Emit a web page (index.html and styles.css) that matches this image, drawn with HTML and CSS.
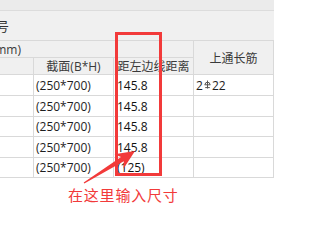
FILE: index.html
```html
<!DOCTYPE html>
<html lang="zh">
<head>
<meta charset="utf-8">
<title>梁参数表</title>
<link rel="stylesheet" href="styles.css">
</head>
<body>
<div class="view">
  <div class="sheet">
    <div class="band"></div>
    <div class="title"><span>构件编号</span></div>
    <div class="hdr merge"><span>定位尺寸(mm)</span></div>
    <div class="hdr rebar">上通长筋</div>
    <div class="hdr"></div>
    <div class="hdr center">截面(B*H)</div>
    <div class="hdr center">距左边线距离</div>

    <div class="cell"></div>
    <div class="cell">(250*700)</div>
    <div class="cell val">145.8</div>
    <div class="cell">2<svg class="bar" width="7" height="9" viewBox="0 0 7 9"><path d="M3.5 0.5V8.5M1 4.8A2.5 2.6 0 0 1 6 4.8M0.6 4.8H6.4M1.2 7.6H5.8" fill="none" stroke="#555" stroke-width="1"/></svg>22</div>

    <div class="cell"></div>
    <div class="cell">(250*700)</div>
    <div class="cell val">145.8</div>
    <div class="cell"></div>

    <div class="cell"></div>
    <div class="cell">(250*700)</div>
    <div class="cell val">145.8</div>
    <div class="cell"></div>

    <div class="cell"></div>
    <div class="cell">(250*700)</div>
    <div class="cell val">145.8</div>
    <div class="cell"></div>

    <div class="cell"></div>
    <div class="cell">(250*700)</div>
    <div class="cell val">(125)</div>
    <div class="cell"></div>
  </div>

  <p class="note">在这里输入尺寸</p>

  <div class="highlight"></div>
  <svg class="arrow" width="293" height="228" viewBox="0 0 293 228">
    <polygon points="135,151 123.6,168.4 123.8,161.3 84.3,183.6 83.7,182.6 121,157.1 114.4,154.2" fill="#f23a3a"/>
  </svg>
</div>
</body>
</html>
```

FILE: styles.css
```css
html, body {
  margin: 0;
  padding: 0;
  background: #ffffff;
}

.view {
  position: relative;
  width: 293px;
  height: 228px;
  overflow: hidden;
  font-family: "Open Sans", "Noto Sans CJK SC", sans-serif;
}

.sheet {
  margin-left: -80px;
  width: 354px;
  display: grid;
  grid-template-columns: 114px 80px 80px 80px;
  grid-template-rows: 11px 30px 17px 17px 21px 21px 20px 21px 20px;
  font-size: 12px;
  color: #222;
}

.sheet > div {
  box-sizing: border-box;
  border-right: 1px solid #d9d9d9;
  border-bottom: 1px solid #d9d9d9;
  display: flex;
  align-items: center;
  overflow: hidden;
  white-space: nowrap;
}

.sheet > .band {
  grid-column: 1 / 5;
  background: #ebebeb;
  border-right: none;
  border-bottom-color: #dcdcdc;
}

.sheet > .title {
  grid-column: 1 / 5;
  background: #f0f0f0;
  border-right: none;
  padding-left: 37px;
  font-size: 13px;
  color: #333;
}

.hdr {
  background: #f0f0f0;
  color: #3a3a3a;
}

.sheet > .merge {
  grid-column: 1 / 4;
  justify-content: flex-end;
  padding-right: 172px;
}

.sheet > .rebar {
  grid-column: 4;
  grid-row: 3 / 5;
  justify-content: center;
}

.sheet > .center {
  justify-content: center;
}

.cell {
  background: #ffffff;
  padding-left: 2px;
  color: #1e1e1e;
}

.sheet > .val {
  padding-left: 3px;
  color: #111;
}

.bar {
  margin: 0 1px 1px 1px;
}

.note {
  margin: 9px 0 0 68px;
  font-family: "Noto Sans CJK SC", sans-serif;
  font-size: 15px;
  line-height: 15px;
  letter-spacing: 0.8px;
  color: #f23a3a;
}

.highlight {
  position: absolute;
  left: 115px;
  top: 32px;
  width: 47px;
  height: 144px;
  box-sizing: border-box;
  border: 3px solid #f23a3a;
}

.arrow {
  position: absolute;
  left: 0;
  top: 0;
}
```
